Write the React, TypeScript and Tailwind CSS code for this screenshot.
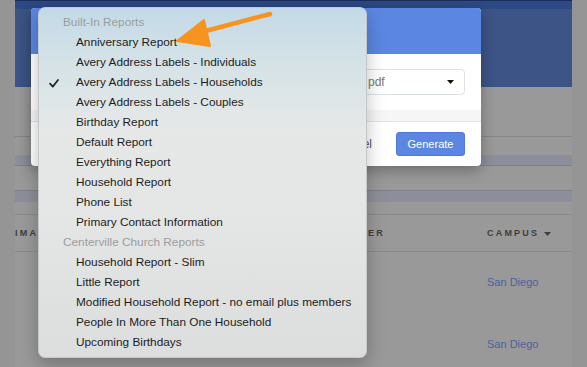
import React from "react";

const builtIn = [
  "Anniversary Report",
  "Avery Address Labels - Individuals",
  "Avery Address Labels - Households",
  "Avery Address Labels - Couples",
  "Birthday Report",
  "Default Report",
  "Everything Report",
  "Household Report",
  "Phone List",
  "Primary Contact Information",
];
const church = [
  "Household Report - Slim",
  "Little Report",
  "Modified Household Report - no email plus members",
  "People In More Than One Household",
  "Upcoming Birthdays",
];

function Item({ label, checked }: { label: string; checked?: boolean }) {
  return (
    <div className="relative flex h-[20px] items-center pl-[37px] text-[11.8px] text-[#1c1c1c]">
      {checked && (
        <svg
          className="absolute left-[10px] top-[6px]"
          width="10"
          height="9"
          viewBox="0 0 10 9"
        >
          <path d="M1 4.6 L3.8 7.6 L9 1" fill="none" stroke="#222" strokeWidth="1.7" strokeLinecap="round" strokeLinejoin="round" />
        </svg>
      )}
      {label}
    </div>
  );
}

function Header({ label }: { label: string }) {
  return (
    <div className="flex h-[20px] items-center pl-[24px] text-[11.8px] text-[#9c9d9f]">{label}</div>
  );
}

export default function App() {
  return (
    <div
      className="relative h-[367px] w-[587px] overflow-hidden bg-[#959595]"
      style={{ fontFamily: '"Liberation Sans", Arial, sans-serif' }}
    >
      {/* Page behind overlay */}
      <div className="mx-[15px] h-full bg-[#999999]">
        <div className="h-[1px] bg-[#1b2d5c]" />
        <div className="h-[8px] bg-[#2d4a87]" />
        <div className="h-[78px] bg-[#3c5486]" />
        <div className="h-[49px]" />
        <div className="h-[1px] bg-[#878787]" />
        <div className="h-[18px]" />
        <div className="h-[10px] bg-[#8c8f99]" />
        <div className="h-[1px] bg-[#7e818a]" />
        <div className="h-[24px]" />
        <div className="h-[1px] bg-[#7e818a]" />
        <div className="h-[11px] bg-[#8c8f99]" />
        <div className="h-[12px]" />
        <div className="h-[1px] bg-[#8a8a8a]" />
        <div className="flex h-[36px] items-center pt-[1px] text-[9px] font-bold tracking-[2.2px] text-[#3e3e3e]">
          <span className="w-[310px]">IMAGE</span>
          <span className="w-[162px] pr-[102px] text-right">NUMBER</span>
          <span className="flex items-center gap-[5px]">
            CAMPUS
            <svg width="7" height="4" viewBox="0 0 7 4"><path d="M0 0 H7 L3.5 4 Z" fill="#3e3e3e" /></svg>
          </span>
        </div>
        <div className="h-[1px] bg-[#8a8a8a]" />
        <div className="flex h-[60px] items-center pl-[472px] text-[11px] text-[#4b62a0]">San Diego</div>
        <div className="flex h-[64px] items-center pl-[472px] text-[11px] text-[#4b62a0]">San Diego</div>
      </div>

      {/* Modal */}
      <div className="absolute left-[31px] top-[8px] flex h-[158px] w-[450px] flex-col overflow-hidden rounded-[4px] bg-white shadow-[0_4px_14px_rgba(0,0,0,0.3)]">
        <div className="h-[46px] bg-[#5b87e2]" />
        <div className="flex h-[56px] items-start px-[16px] pt-[15px]">
          <div className="flex h-[26px] w-full items-center justify-between rounded-[4px] border border-[#dde1e8] pl-[320px] pr-[10px] text-[12px] text-[#777]">
            <span>pdf</span>
            <svg width="7" height="4" viewBox="0 0 7 4"><path d="M0 0 H7 L3.5 4 Z" fill="#111" /></svg>
          </div>
        </div>
        <div className="h-[12px] border-b border-[#e3e3e3] bg-[#f6f6f6]" />
        <div className="flex flex-1 items-center justify-end gap-[24px] px-[16px]">
          <span className="text-[12px] text-[#555]">Cancel</span>
          <div className="flex h-[24px] w-[69px] items-center justify-center rounded-[3px] border border-[#4f7bd6] bg-[#5b87e2] text-[11px] text-white">
            Generate
          </div>
        </div>
      </div>

      {/* Dropdown menu */}
      <div className="absolute left-[38px] top-[7px] w-[329px] rounded-[7px] border border-[#c5c8cb] bg-[linear-gradient(180deg,#c3d9e8_0%,#d4e2e6_15%,#e6e8e8_35%,#e4e5e5_60%,#dcdddd_100%)] pb-[4px] pt-[5px] shadow-[0_6px_18px_rgba(0,0,0,0.25)]">
        <Header label="Built-In Reports" />
        {builtIn.map((l) => (
          <Item key={l} label={l} checked={l === "Avery Address Labels - Households"} />
        ))}
        <Header label="Centerville Church Reports" />
        {church.map((l) => (
          <Item key={l} label={l} />
        ))}
      </div>

      {/* Orange arrow */}
      <svg className="absolute left-0 top-0" width="587" height="367" viewBox="0 0 587 367">
        <path d="M270 14 L198 33" stroke="#f7931e" strokeWidth="4.5" strokeLinecap="round" fill="none" />
        <path d="M177 41 L204 20 L210 46 Z" fill="#f7931e" stroke="#f7931e" strokeWidth="2" strokeLinejoin="round" />
      </svg>
    </div>
  );
}
